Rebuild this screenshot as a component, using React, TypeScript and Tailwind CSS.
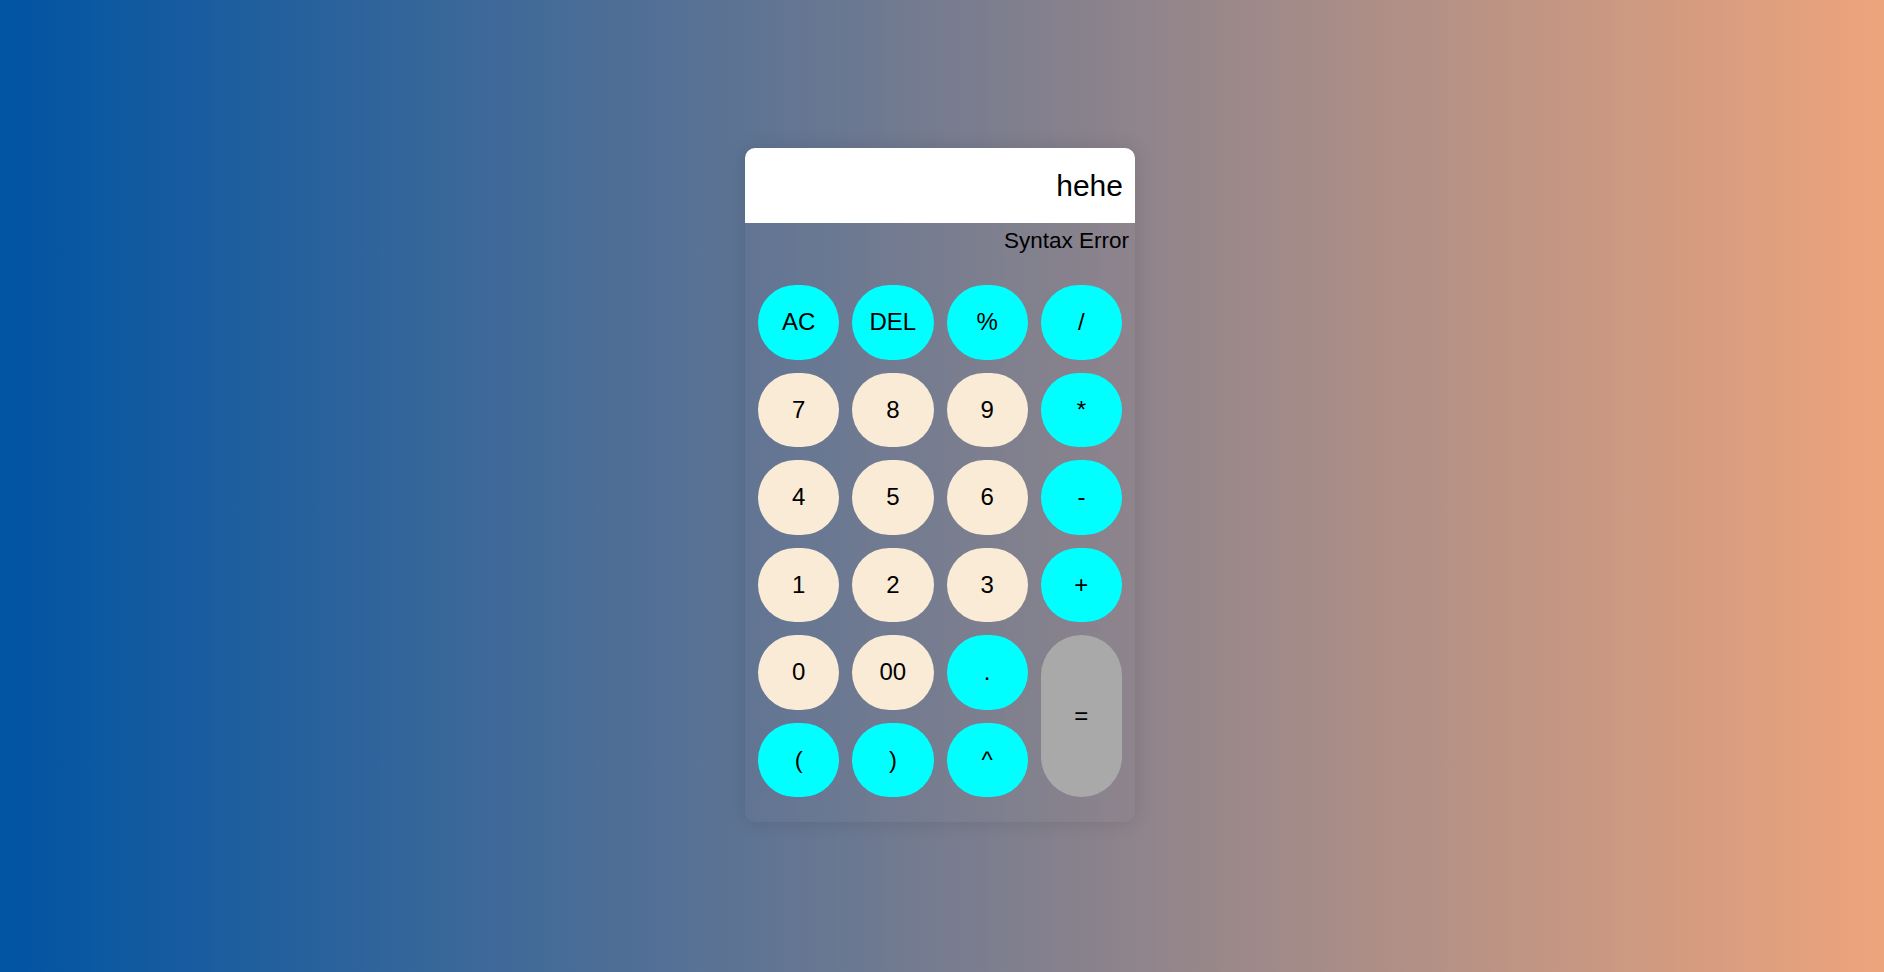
import React from "react";

type B = { label: string; kind: "op" | "num" | "eq" };

const buttons: B[] = [
  { label: "AC", kind: "op" },
  { label: "DEL", kind: "op" },
  { label: "%", kind: "op" },
  { label: "/", kind: "op" },
  { label: "7", kind: "num" },
  { label: "8", kind: "num" },
  { label: "9", kind: "num" },
  { label: "*", kind: "op" },
  { label: "4", kind: "num" },
  { label: "5", kind: "num" },
  { label: "6", kind: "num" },
  { label: "-", kind: "op" },
  { label: "1", kind: "num" },
  { label: "2", kind: "num" },
  { label: "3", kind: "num" },
  { label: "+", kind: "op" },
  { label: "0", kind: "num" },
  { label: "00", kind: "num" },
  { label: ".", kind: "op" },
  { label: "=", kind: "eq" },
  { label: "(", kind: "op" },
  { label: ")", kind: "op" },
  { label: "^", kind: "op" },
];

export default function App() {
  return (
    <div
      className="min-h-screen w-full flex items-center justify-center bg-[linear-gradient(to_right,#0054a3,#eda47c)]"
      style={{ fontFamily: '"Liberation Sans", Arial, sans-serif' }}
    >
      <div className="w-[390px] mr-[4px] mb-[2px] rounded-[10px] bg-[rgba(140,140,150,0.08)] shadow-[0_0_20px_rgba(0,0,0,0.12)] pb-[25px]">
        <div className="h-[75px] bg-white rounded-t-[10px] flex items-center justify-end pr-[12px] text-[30px] text-black">
          hehe
        </div>
        <div className="h-[62px] flex justify-end items-start pt-[5px] pr-[6px] text-[22.5px] leading-[25px] text-black">
          Syntax Error
        </div>
        <div className="grid grid-cols-4 auto-rows-[74.5px] gap-x-[13px] gap-y-[13px] px-[13px]">
          {buttons.map((b) => (
            <button
              key={b.label}
              className={
                "flex items-center justify-center text-[24px] text-black rounded-full " +
                (b.kind === "op"
                  ? "bg-[#00ffff]"
                  : b.kind === "num"
                  ? "bg-[#faebd7]"
                  : "bg-[#a9a9a9] row-span-2")
              }
            >
              {b.label}
            </button>
          ))}
        </div>
      </div>
    </div>
  );
}
